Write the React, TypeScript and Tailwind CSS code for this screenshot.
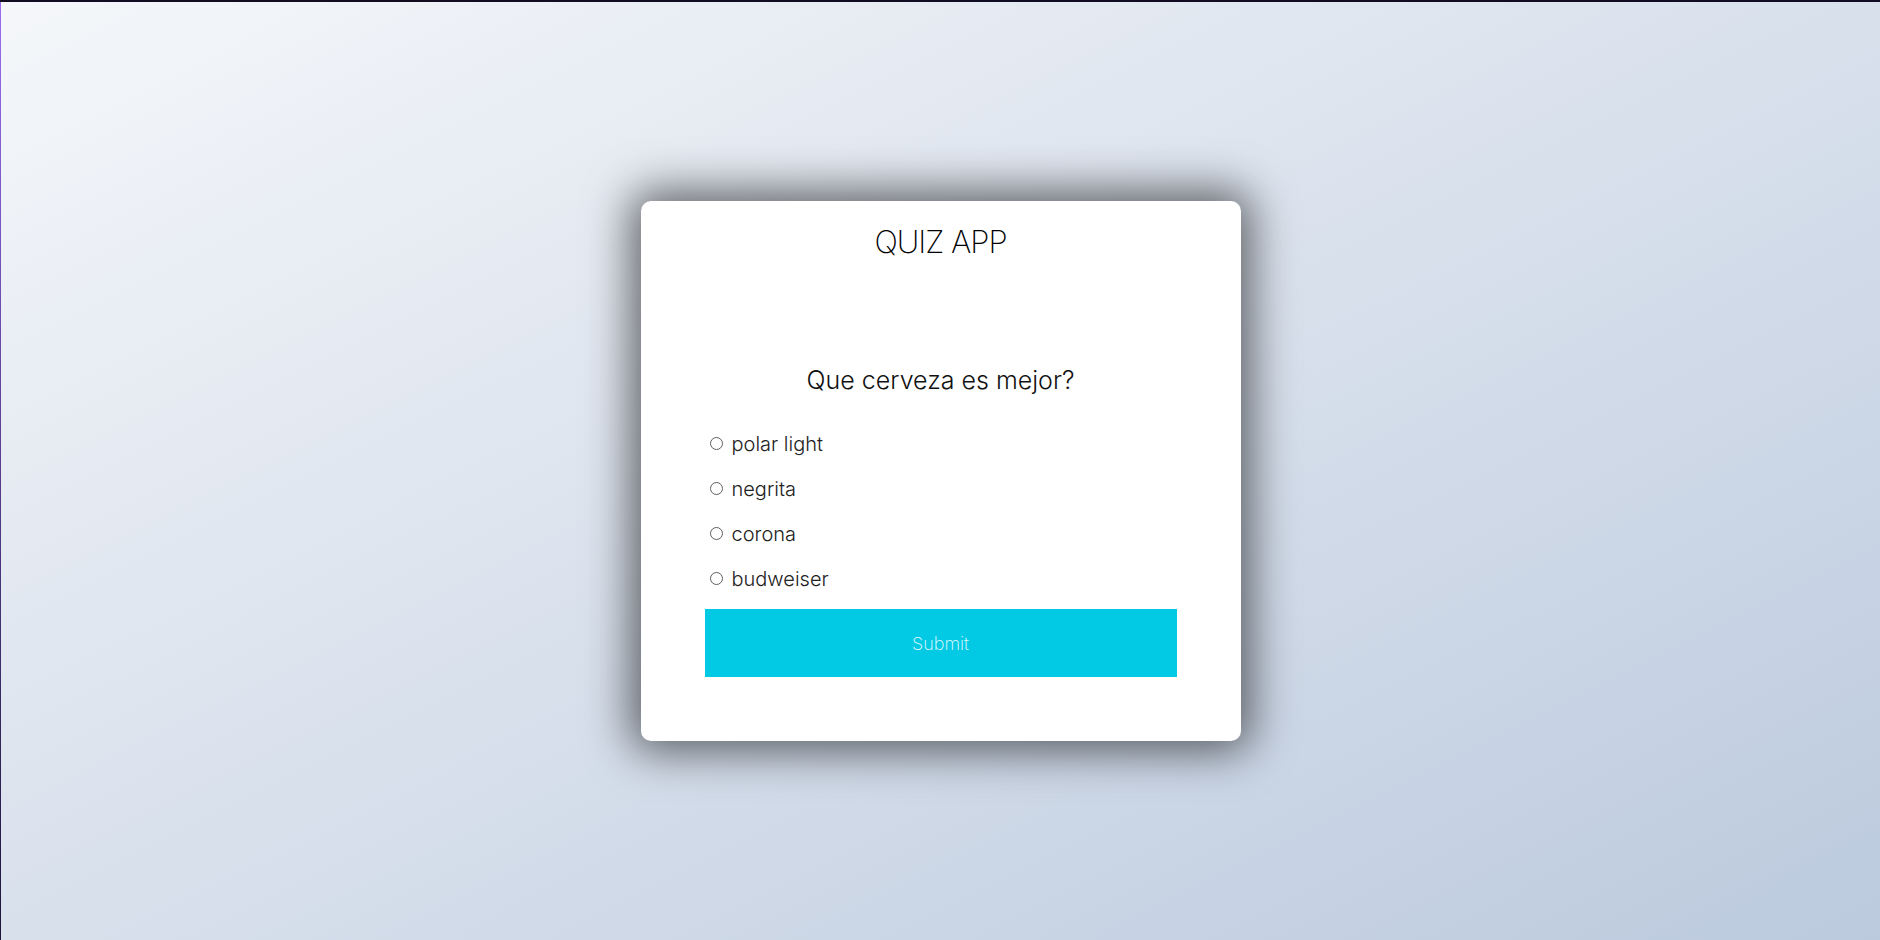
import React, { useState } from "react";

const options = ["polar light", "negrita", "corona", "budweiser"];

export default function App() {
  const [answer, setAnswer] = useState<string | null>(null);

  return (
    <div className="flex h-[940px] w-full border-t-2 border-[#110c22] font-['Inter','Noto_Sans',sans-serif]">
      {/* left edge line */}
      <div className="w-px shrink-0 bg-gradient-to-b from-[#9a6cf0] to-[#1c1538]" />
      <div className="flex flex-1 items-center justify-center bg-gradient-to-br from-[#f5f7fa] to-[#bccade]">
        <div className="flex h-[540px] w-[600px] flex-col rounded-[10px] bg-white px-16 pb-16 pt-[17px] shadow-[0_0_45px_10px_rgba(0,0,0,0.58)]">
          <h1 className="text-center text-[31px] font-extralight leading-[48px] tracking-[-1px] text-black">
            QUIZ APP
          </h1>

          <h2 className="mt-[96px] text-center text-[25px] font-light leading-[36px] text-[#111]">
            Que cerveza es mejor?
          </h2>

          <ul className="mt-[23px] flex flex-col">
            {options.map((opt) => (
              <li key={opt} className="flex h-[45px] items-center">
                <input
                  type="radio"
                  name="answer"
                  id={opt}
                  checked={answer === opt}
                  onChange={() => setAnswer(opt)}
                  className="ml-[5px] mr-[9px] h-[13px] w-[13px] appearance-none rounded-full border border-[#5f5f5f] bg-white checked:border-[4px] checked:border-[#03cae4]"
                />
                <label htmlFor={opt} className="text-[20px] font-light text-[#222]">
                  {opt}
                </label>
              </li>
            ))}
          </ul>

          <button className="mt-auto h-[68px] w-full bg-[#03cae4] text-[18px] font-extralight text-[#e6fbff]">
            Submit
          </button>
        </div>
      </div>
    </div>
  );
}
